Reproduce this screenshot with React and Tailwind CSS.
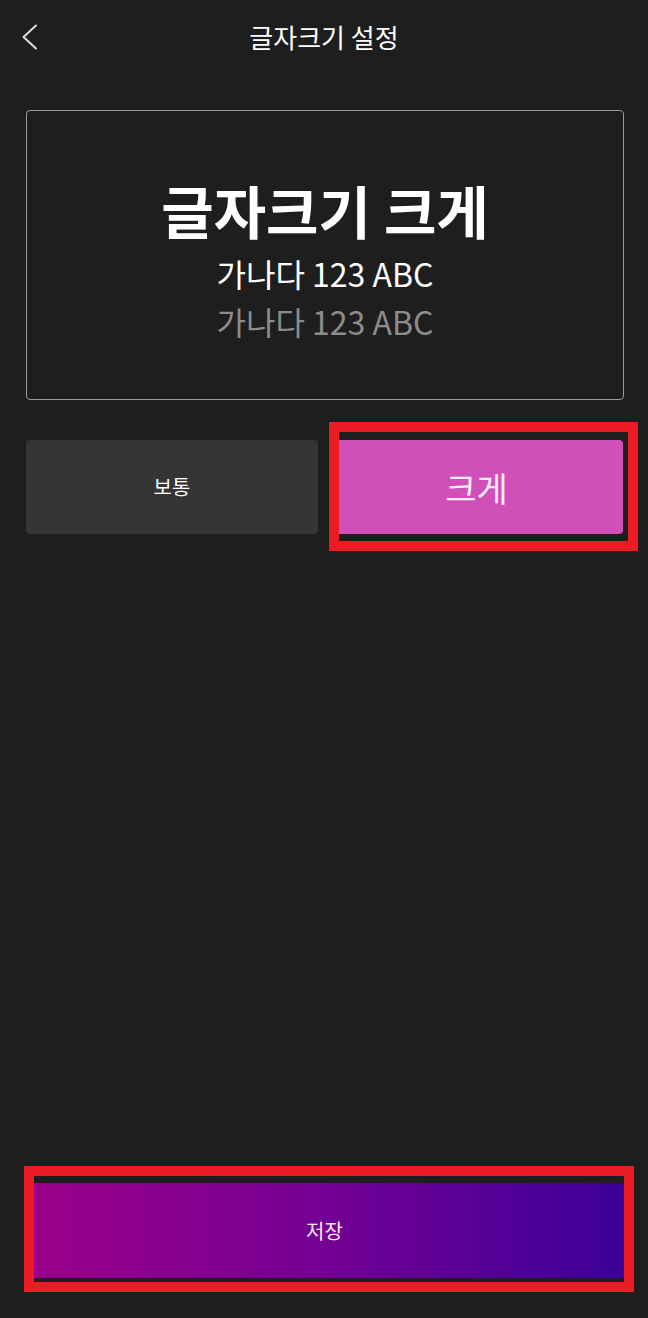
import React from "react";

export default function App() {
  const font = { fontFamily: '"Noto Sans CJK KR", "Noto Sans", sans-serif' };
  return (
    <div
      style={font}
      className="w-[648px] h-[1318px] bg-[#1e1e1e] flex flex-col text-white overflow-hidden"
    >
      {/* Header */}
      <div className="relative h-[74px] flex items-center justify-center">
        <div className="absolute left-[21px] top-[24px]">
          <svg width="17" height="26" viewBox="0 0 17 26" fill="none">
            <path d="M15 1.5 L2.5 13 L15 24.5" stroke="#dcdcdc" strokeWidth="2" strokeLinecap="round" strokeLinejoin="round" />
          </svg>
        </div>
        <div className="text-[26px] leading-none text-white">글자크기 설정</div>
      </div>

      {/* Preview box */}
      <div className="ml-[26px] w-[598px] mt-[36px] h-[290px] border border-[#9a9a9a] rounded-[4px] flex flex-col items-center pt-[58px]">
        <div className="text-[57px] font-bold leading-[80px] text-white">글자크기 크게</div>
        <div className="text-[32px] leading-[48px] text-white">가나다 123 ABC</div>
        <div className="text-[32px] leading-[48px] text-[#8c8c8c]">가나다 123 ABC</div>
      </div>

      {/* Size buttons */}
      <div className="mt-[40px] pl-[26px] flex gap-[12px]">
        <div className="w-[292px] h-[94px] rounded-[4px] bg-[#353535] flex items-center justify-center text-[20px] text-white">
          보통
        </div>
        <div className="relative w-[293px] h-[94px] rounded-[4px] bg-[#d04fb8] flex items-center justify-center text-[34px] text-[#fcecf8]">
          크게
          <div className="absolute left-[-1px] top-[-18px] w-[309px] h-[129px] border-[10px] border-[#ec1c24]" />
        </div>
      </div>

      {/* Save */}
      <div className="relative mt-auto mb-[40px] ml-[26px] w-[597px] h-[95px] bg-linear-to-r/srgb from-[#9c0088] via-[#740094] to-[#3c0098] flex items-center justify-center text-[20px] text-[#fcecf8]">
        저장
        <div className="absolute left-[-2px] top-[-17px] w-[610px] h-[126px] border-[10px] border-[#ec1c24]" />
      </div>
    </div>
  );
}
